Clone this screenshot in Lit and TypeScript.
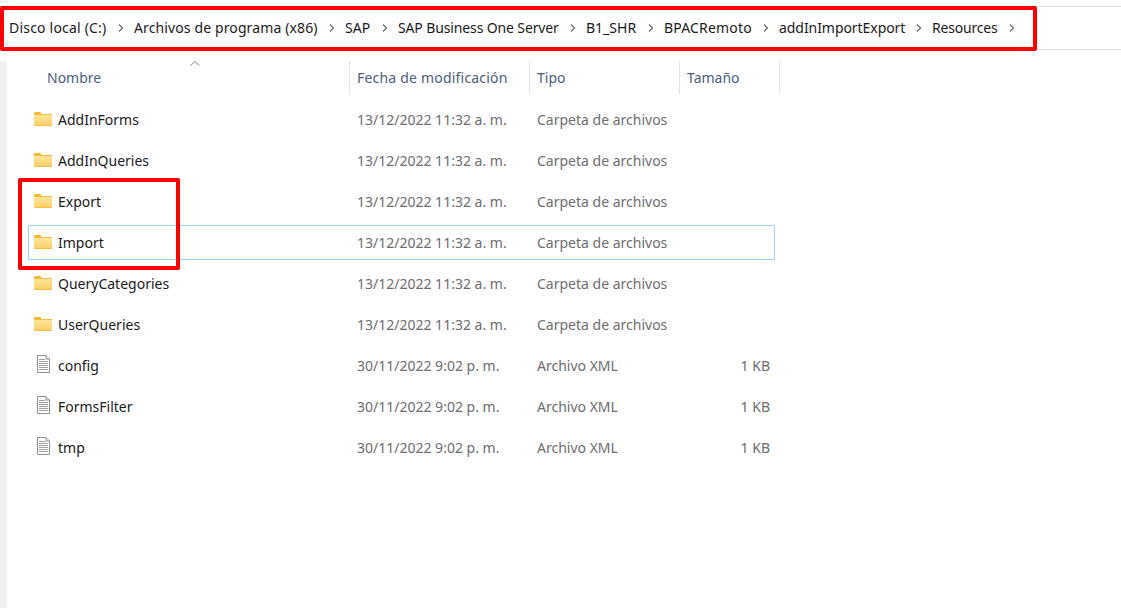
import { LitElement, html, css, svg } from "lit";
import { customElement } from "lit/decorators.js";

const crumbs = [
  { t: "Disco local (C:)", w: 125, ls: 0.2 },
  { t: "Archivos de programa (x86)", w: 211, ls: 0.12 },
  { t: "SAP", w: 53, ls: 0 },
  { t: "SAP Business One Server", w: 188, ls: -0.13 },
  { t: "B1_SHR", w: 78, ls: 0 },
  { t: "BPACRemoto", w: 115, ls: 0.18 },
  { t: "addInImportExport", w: 153, ls: -0.06 },
  { t: "Resources", w: 93, ls: -0.2 },
];
type Row = { name: string; date: string; type: string; size: string; kind: "folder" | "file"; selected?: boolean };
const F = "13/12/2022 11:32 a. m.";
const D = "30/11/2022 9:02 p. m.";
const rows: Row[] = [
  { name: "AddInForms", date: F, type: "Carpeta de archivos", size: "", kind: "folder" },
  { name: "AddInQueries", date: F, type: "Carpeta de archivos", size: "", kind: "folder" },
  { name: "Export", date: F, type: "Carpeta de archivos", size: "", kind: "folder" },
  { name: "Import", date: F, type: "Carpeta de archivos", size: "", kind: "folder", selected: true },
  { name: "QueryCategories", date: F, type: "Carpeta de archivos", size: "", kind: "folder" },
  { name: "UserQueries", date: F, type: "Carpeta de archivos", size: "", kind: "folder" },
  { name: "config", date: D, type: "Archivo XML", size: "1 KB", kind: "file" },
  { name: "FormsFilter", date: D, type: "Archivo XML", size: "1 KB", kind: "file" },
  { name: "tmp", date: D, type: "Archivo XML", size: "1 KB", kind: "file" },
];

const folder = svg`<svg class="ic fo" width="20" height="16" viewBox="0 0 20 16">
  <defs><linearGradient id="fg" x1="0" y1="0" x2="0" y2="1"><stop offset="0" stop-color="#ffe69c"/><stop offset="1" stop-color="#fcd06a"/></linearGradient></defs>
  <path d="M1 2.500q0-1.500 1.500-1.500h4.500l2 2h-8z" fill="#f5b72c"/>
  <path d="M1 3h18v11q0 1-1 1h-16q-1 0-1-1z" fill="#f3bd3f"/>
  <path d="M1 4h18v9.500q0 .5-.5.5h-17q-.5 0-.5-.5z" fill="url(#fg)"/>
</svg>`;
const file = svg`<svg class="ic fi" width="20" height="18" viewBox="0 0 20 18">
  <path d="M4.500 .5h8.500l3.500 3.500v13.500h-12z" fill="#fff" stroke="#8f8f8f"/>
  <path d="M13 .5v3.500h3.500" fill="#e6e6e6" stroke="#8f8f8f"/>
  <path d="M6 4.500h6M6 6.500h9M6 8.500h9M6 10.500h9M6 12.500h9M6 14.500h9" stroke="#a0a0a0" fill="none"/>
</svg>`;
const chev = svg`<svg class="chev" width="8" height="10" viewBox="0 0 8 10"><path d="M2 1.500l3.500 3.500-3.500 3.500" fill="none" stroke="#6b6b6b" stroke-width="1.300"/></svg>`;

@customElement("app-root")
export class AppRoot extends LitElement {
  static styles = css`
    :host { display: block; width: 1121px; height: 608px; position: relative; overflow: hidden; background: #fff;
      font-family: "Noto Sans", "Open Sans", sans-serif; font-size: 14px; color: #1a1a1a; }
    .topspace { height: 6px; }
    .bar { height: 42px; border-top: 1px solid #e0e0e0; border-bottom: 1px solid #e0e0e0; display: flex; align-items: center; padding-left: 9px; }
    .crumb { white-space: nowrap; display: flex; justify-content: space-between; align-items: center; flex: none; box-sizing: border-box; padding-right: 9px; height: 20px; margin-top: -2px; }
    .chev { margin-top: 2px; }
    .body { display: flex; height: 558px; }
    .side { width: 7px; background: #f1f1f1; margin-top: 11px; }
    .list { flex: 1; padding-top: 11px; }
    .head { display: grid; grid-template-columns: 343px 180px 150px 100px; height: 33px; position: relative; color: #4c607a; align-items: center; }
    .h { height: 33px; display: flex; align-items: center; padding-left: 7px; border-right: 1px solid #e3e3e3; box-sizing: border-box; }
    .h.n { padding-left: 40px; }
    .h.d { letter-spacing: .2px; }
    .sort { position: absolute; left: 182px; top: -1px; }
    .rows { display: flex; flex-direction: column; gap: 6px; padding-top: 8px; }
    .row { display: grid; grid-template-columns: 321px 180px 150px 90px; height: 35px; margin-left: 21px; width: 747px; box-sizing: border-box; border: 1px solid transparent; align-items: center; border-radius: 1px; }
    .row.sel { border-color: #99d1ff; }
    .name { display: flex; align-items: center; padding-left: 4px; color: #1a1a1a; }
    .name .ic { flex: none; }
    .fo { margin-top: -2px; }
    .fi { margin-top: -3px; }
    .name span { margin-left: 5px; }
    .c { color: #6d6d6d; padding-left: 7px; white-space: nowrap; }
    .s { text-align: right; padding-right: 0; }
    .red { position: absolute; box-sizing: border-box; border: 4px solid #f00; border-radius: 2px; }
    .r1 { left: 0; top: 6px; width: 1037px; height: 45px; }
    .r2 { left: 18px; top: 178px; width: 162px; height: 92px; }
  `;
  render() {
    return html`
      <div class="topspace"></div>
      <div class="bar">
        ${crumbs.map(c => html`<div class="crumb" style="width:${c.w}px"><span style="letter-spacing:${c.ls}px">${c.t}</span>${chev}</div>`)}
      </div>
      <div class="body">
        <div class="side"></div>
        <div class="list">
          <div class="head">
            <div class="h n">Nombre</div><div class="h d">Fecha de modificación</div><div class="h">Tipo</div><div class="h">Tamaño</div>
            <svg class="sort" width="12" height="7" viewBox="0 0 12 7"><path d="M1.500 5.500l4.500-4 4.500 4" fill="none" stroke="#8a8a8a"/></svg>
          </div>
          <div class="rows">
            ${rows.map(r => html`<div class="row ${r.selected ? "sel" : ""}">
              <div class="name">${r.kind === "folder" ? folder : file}<span>${r.name}</span></div>
              <div class="c">${r.date}</div><div class="c">${r.type}</div><div class="c s">${r.size}</div>
            </div>`)}
          </div>
        </div>
      </div>
      <div class="red r1"></div>
      <div class="red r2"></div>
    `;
  }
}
